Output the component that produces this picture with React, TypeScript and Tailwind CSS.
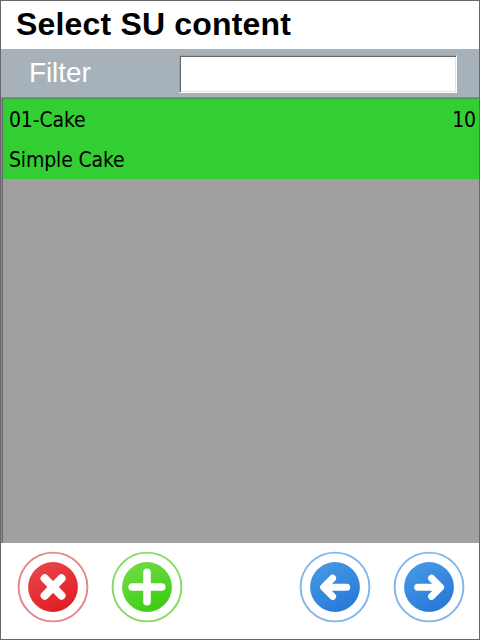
import type { ReactNode } from "react";

type RoundButtonProps = {
  id: string;
  label: string;
  ring: string;
  from: string;
  to: string;
  children: ReactNode;
};

function RoundButton({ id, label, ring, from, to, children }: RoundButtonProps) {
  return (
    <button type="button" aria-label={label} className="block h-[72px] w-[72px]">
      <svg viewBox="0 0 72 72" className="block h-full w-full" fill="none">
        <defs>
          <linearGradient id={id} x1="0.2" y1="0" x2="0.75" y2="1">
            <stop offset="0" stopColor={from} />
            <stop offset="1" stopColor={to} />
          </linearGradient>
        </defs>
        <circle cx="36" cy="36" r="34.4" stroke={ring} strokeWidth="1.9" />
        <circle cx="36" cy="36" r="24.9" fill={`url(#${id})`} />
        <g stroke="#fff" strokeLinecap="round" strokeLinejoin="round">
          {children}
        </g>
      </svg>
    </button>
  );
}

export default function App() {
  return (
    <div className="flex h-[640px] w-[480px] flex-col border border-[#67676a] bg-white">
      <header className="h-12 shrink-0 pl-[15px]">
        <h1 className="font-['Liberation_Sans',Arial,sans-serif] text-[32px] leading-[46px] font-bold tracking-[0.18px] text-black">
          Select SU content
        </h1>
      </header>

      <div className="flex h-12 shrink-0 bg-[#a7b1ba] pt-[6px] pl-7">
        <label
          htmlFor="filter"
          className="w-[150px] font-['Liberation_Sans',Arial,sans-serif] text-[28px] leading-9 tracking-[-0.1px] text-white"
        >
          Filter
        </label>
        <input
          id="filter"
          className="h-[38px] w-[278px] border border-t-[#a0a0a0] border-r-white border-b-white border-l-[#a0a0a0] bg-white shadow-[inset_1px_1px_0_#69696b,inset_-1px_-1px_0_#dfe3e8] outline-none"
        />
      </div>

      <main className="h-[446px] shrink-0 border-t border-l border-[#8a8a8a] bg-[#a0a0a0] shadow-[inset_1px_1px_0_#696969]">
        <div className="ml-px h-[81px] border-t border-[#4b944b] bg-[#33ce33] pt-px pr-[3px] pl-[6px] font-['DejaVu_Sans_Condensed','DejaVu_Sans',Tahoma,sans-serif] text-[21px] leading-10 tracking-[-0.15px] text-black">
          <div className="flex justify-between">
            <span>01-Cake</span>
            <span>10</span>
          </div>
          <div>Simple Cake</div>
        </div>
      </main>

      <footer className="flex justify-between pt-2 pr-[14px] pl-4">
        <div className="flex gap-[22px]">
          <RoundButton id="cancel" label="Cancel" ring="#e5858a" from="#e9474b" to="#e01b22">
            <path d="M27.7 27.4 44.5 44.6M44.5 27.4 27.7 44.6" strokeWidth="8.2" />
          </RoundButton>
          <RoundButton id="add" label="Add" ring="#83dc60" from="#72dd45" to="#3acb13">
            <path d="M36 21.2V50.8M21.2 36H50.8" strokeWidth="7.6" />
          </RoundButton>
        </div>
        <div className="flex gap-[22px]">
          <RoundButton id="back" label="Back" ring="#82b6e8" from="#4699e5" to="#2778d8">
            <path d="M47.7 36.3H26.5" strokeWidth="7" />
            <path d="M33.6 27.2 24.6 36.3 33.6 45.4" strokeWidth="7" />
          </RoundButton>
          <RoundButton id="next" label="Next" ring="#82b6e8" from="#4699e5" to="#2778d8">
            <path d="M24.7 36.3H45.5" strokeWidth="7" />
            <path d="M38.6 27.2 47.6 36.3 38.6 45.4" strokeWidth="7" />
          </RoundButton>
        </div>
      </footer>
    </div>
  );
}
